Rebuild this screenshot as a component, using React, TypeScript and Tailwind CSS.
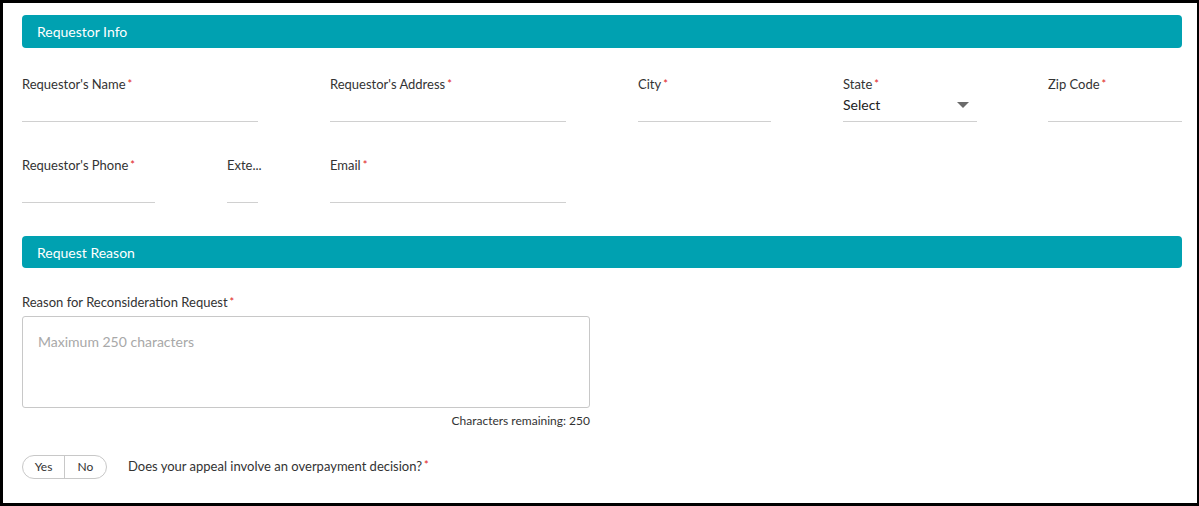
import React from "react";

const Req = () => <span className="text-[#e02020] text-[11px] align-top ml-[2px]">*</span>;

function Field({ label, width, required = true, children }: { label: string; width: string; required?: boolean; children?: React.ReactNode }) {
  return (
    <div className={`flex flex-col ${width}`}>
      <div className="h-4 leading-4 text-[13px] text-[#333] whitespace-nowrap">
        {label}
        {required && <Req />}
      </div>
      <div className="h-[30px] border-b border-[#d0d0d0] flex items-start pt-[5px]">{children}</div>
    </div>
  );
}

function Header({ title, h }: { title: string; h: string }) {
  return (
    <div className={`${h} bg-[#00a1b1] rounded-[4px] flex items-center pl-[15px] text-white text-[14px]`}>
      {title}
    </div>
  );
}

export default function App() {
  return (
    <div
      className="w-[1199px] h-[506px] bg-white border-t-[3px] border-l-[3px] border-r-2 border-b-[3px] border-black pt-3 pl-[19px] pr-[15px] text-[#333]"
      style={{ fontFamily: "Lato, 'Noto Sans', sans-serif" }}
    >
      <Header title="Requestor Info" h="h-[33px]" />
      <div className="flex gap-[72px] mt-7">
        <Field label="Requestor's Name" width="w-[236px]" />
        <Field label="Requestor's Address" width="w-[236px]" />
        <Field label="City" width="w-[133px]" />
        <Field label="State" width="w-[134px]">
          <div className="flex w-full items-center justify-between pt-0 -mt-[3px]">
            <span className="text-[14px] text-[#222]">Select</span>
            <svg width="12" height="7" viewBox="0 0 12 7" className="mr-[8px] mt-[2px]">
              <path d="M0 0 L12 0 L6 6 Z" fill="#6b6b6b" />
            </svg>
          </div>
        </Field>
        <div className="-ml-[1px]">
          <Field label="Zip Code" width="w-[134px]" />
        </div>
      </div>
      <div className="flex gap-[72px] mt-[35px]">
        <Field label="Requestor's Phone" width="w-[133px]" />
        <Field label="Exte..." width="w-[31px]" required={false} />
        <Field label="Email" width="w-[236px]" />
      </div>
      <div className="mt-[33px]">
        <Header title="Request Reason" h="h-[32px]" />
      </div>
      <div className="mt-[26px] h-4 leading-4 text-[13px] text-[#333]">
        Reason for Reconsideration Request
        <Req />
      </div>
      <div className="w-[568px]">
        <div className="mt-[6px] h-[92px] border border-[#c8c8c8] rounded-[3px] px-[15px] pt-[14px] text-[14px] text-[#a8a8a8]">
          Maximum 250 characters
        </div>
        <div className="mt-[5px] h-4 leading-4 text-right text-[12px] text-[#333]">Characters remaining: 250</div>
      </div>
      <div className="mt-[26px] flex items-center">
        <div className="flex h-6 w-[85px] border border-[#c8c8c8] rounded-full text-[12px] text-[#333]">
          <div className="w-[42px] flex items-center justify-center border-r border-[#c8c8c8]">Yes</div>
          <div className="flex-1 flex items-center justify-center">No</div>
        </div>
        <div className="ml-[21px] text-[13px] text-[#333]">
          Does your appeal involve an overpayment decision?
          <Req />
        </div>
      </div>
    </div>
  );
}
